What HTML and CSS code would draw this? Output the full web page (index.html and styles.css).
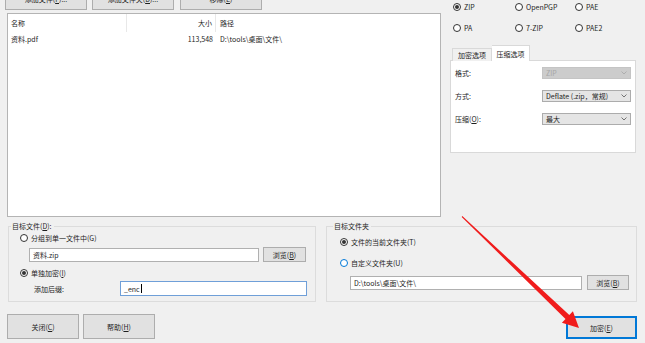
FILE: index.html
```html
<!DOCTYPE html>
<html lang="zh-CN">
<head>
    <meta charset="UTF-8">
    <meta name="viewport" content="width=device-width, initial-scale=1.0">
    <title>加密文件</title>
    <link rel="stylesheet" href="styles.css">
</head>
<body>

    <div class="window">
        <div class="top">
            <!-- 文件列表 -->
            <div class="files">
                <div class="toolbar">
                    <button class="btn">添加文件(<u>F</u>)...</button>
                    <button class="btn">添加文件夹(<u>D</u>)...</button>
                    <button class="btn btn-remove">移除(<u>E</u>)</button>
                </div>
                <div class="list">
                    <div class="list-head">
                        <span class="col-name">名称</span>
                        <span class="col-size">大小</span>
                        <span class="col-path">路径</span>
                    </div>
                    <div class="list-row">
                        <span class="col-name">资料.pdf</span>
                        <span class="col-size">113,548</span>
                        <span class="col-path">D:\tools\桌面\文件\</span>
                    </div>
                </div>
            </div>

            <!-- 格式和选项 -->
            <div class="options">
                <div class="formats">
                    <label class="radio-item"><span class="radio checked"></span>ZIP</label>
                    <label class="radio-item"><span class="radio"></span>OpenPGP</label>
                    <label class="radio-item"><span class="radio"></span>PAE</label>
                    <label class="radio-item"><span class="radio"></span>PA</label>
                    <label class="radio-item"><span class="radio"></span>7-ZIP</label>
                    <label class="radio-item"><span class="radio"></span>PAE2</label>
                </div>
                <div class="tabs">
                    <span class="tab">加密选项</span>
                    <span class="tab active">压缩选项</span>
                </div>
                <div class="tab-panel">
                    <div class="field">
                        <span class="field-label">格式:</span>
                        <span class="select disabled">ZIP
                            <svg width="6" height="4" viewBox="0 0 6 4"><path d="M0.5 0.5 L3 3 L5.5 0.5" fill="none" stroke="currentColor" stroke-width="0.8"/></svg>
                        </span>
                    </div>
                    <div class="field">
                        <span class="field-label">方式:</span>
                        <span class="select">Deflate (.zip，常规)
                            <svg width="6" height="4" viewBox="0 0 6 4"><path d="M0.5 0.5 L3 3 L5.5 0.5" fill="none" stroke="currentColor" stroke-width="0.8"/></svg>
                        </span>
                    </div>
                    <div class="field">
                        <span class="field-label">压缩(<u>O</u>):</span>
                        <span class="select">最大
                            <svg width="6" height="4" viewBox="0 0 6 4"><path d="M0.5 0.5 L3 3 L5.5 0.5" fill="none" stroke="currentColor" stroke-width="0.8"/></svg>
                        </span>
                    </div>
                </div>
            </div>
        </div>

        <div class="groups">
            <fieldset class="group group-file">
                <legend>目标文件(<u>D</u>):</legend>
                <div class="g-row row-single"><span class="radio"></span>分组到单一文件中(G)</div>
                <div class="g-row row-zip">
                    <span class="input input-zip">资料.zip</span>
                    <button class="btn btn-browse">浏览(<u>B</u>)</button>
                </div>
                <div class="g-row row-each"><span class="radio checked"></span>单独加密(<u>I</u>)</div>
                <div class="g-row row-suffix">
                    <span class="suffix-label">添加后缀:</span>
                    <span class="input input-suffix">_enc<span class="caret"></span></span>
                </div>
            </fieldset>

            <fieldset class="group group-folder">
                <legend>目标文件夹</legend>
                <div class="g-row row-current"><span class="radio checked"></span>文件的当前文件夹(T)</div>
                <div class="g-row row-custom"><span class="radio hover"></span>自定义文件夹(U)</div>
                <div class="g-row row-folder">
                    <span class="input input-folder">D:\tools\桌面\文件\</span>
                    <button class="btn btn-browse">浏览(<u>B</u>)</button>
                </div>
            </fieldset>
        </div>

        <div class="footer">
            <button class="btn btn-foot">关闭(<u>C</u>)</button>
            <button class="btn btn-foot">帮助(<u>H</u>)</button>
            <button class="btn btn-foot btn-default">加密(<u>E</u>)</button>
        </div>

        <!-- 红色箭头标注 -->
        <svg class="arrow" width="645" height="343" viewBox="0 0 645 343">
            <polygon points="461.7,216.9 565.5,319 561.9,322.8 579,328 572.9,311.2 569.3,315 462.3,216.1" fill="#f01c1c"/>
        </svg>
    </div>

</body>
</html>
```

FILE: styles.css
```css
* {
    box-sizing: border-box;
}

body {
    margin: 0;
    background: #f0f0f0;
    font-family: "Noto Sans CJK SC", "Microsoft YaHei", sans-serif;
    font-size: 7px;
    color: #1e1e1e;
}

u {
    text-decoration: underline;
}

.window {
    position: relative;
    width: 645px;
    height: 343px;
    overflow: hidden;
}

.btn {
    display: flex;
    align-items: center;
    justify-content: center;
    padding: 0;
    background: #e1e1e1;
    border: 1px solid #adadad;
    font: inherit;
    color: inherit;
}

/* Верхняя часть */
.top {
    display: flex;
    height: 217px;
}

.files {
    width: 441px;
    padding-left: 7px;
    display: flex;
    flex-direction: column;
}

.toolbar {
    display: flex;
    gap: 5px;
    margin-top: -12px;
    margin-left: -2px;
}

.toolbar .btn {
    width: 82px;
    height: 22px;
}

.btn-remove {
    margin-left: 1px;
}

.list {
    flex: 1;
    margin-top: 3px;
    background: #fff;
    border: 1px solid #b4b4b4;
}

.list-head,
.list-row {
    display: flex;
}

.list-head {
    height: 18px;
}

.list-row {
    height: 14px;
}

.list-head span,
.list-row span {
    display: flex;
    align-items: center;
}

.list-head span {
    border-right: 1px solid #e8e8e8;
}

.list-head .col-path {
    border-right: none;
}

.col-name {
    width: 119px;
    padding-left: 3px;
}

.col-size {
    width: 89px;
    justify-content: flex-end;
    padding-right: 3px;
}

.col-path {
    padding-left: 4px;
}

.options {
    flex: 1;
    margin-left: 6px;
}

.formats {
    display: grid;
    grid-template-columns: 62px 60px auto;
    grid-auto-rows: 14px;
    row-gap: 7px;
    padding-left: 6px;
}

.radio-item,
.g-row {
    display: flex;
    align-items: center;
}

.radio {
    width: 8px;
    height: 8px;
    margin-right: 3px;
    border: 1px solid #333;
    border-radius: 50%;
    background: #fff;
    display: flex;
    align-items: center;
    justify-content: center;
}

.radio.checked::after {
    content: "";
    width: 4px;
    height: 4px;
    border-radius: 50%;
    background: #333;
}

.radio.hover {
    border-color: #0078d7;
}

.tabs {
    display: flex;
    align-items: flex-end;
    height: 16px;
    margin-top: 10px;
    margin-left: 5px;
    margin-bottom: -1px;
}

.tab {
    display: flex;
    align-items: center;
    justify-content: center;
    width: 40px;
    height: 13px;
    border: 1px solid #d9d9d9;
    border-bottom: none;
    background: #f0f0f0;
}

.tab.active {
    position: relative;
    width: 38px;
    height: 16px;
    background: #fff;
    border-left: none;
}

.tab-panel {
    width: 186px;
    height: 93px;
    margin-left: 3px;
    padding: 6px 4px 0;
    background: #fff;
    border: 1px solid #d9d9d9;
    display: flex;
    flex-direction: column;
    gap: 11px;
}

.field {
    display: flex;
    align-items: center;
    height: 12px;
}

.field-label {
    width: 87px;
}

.select {
    width: 89px;
    height: 12px;
    display: flex;
    align-items: center;
    justify-content: space-between;
    padding: 0 3px;
    background: #e5e5e5;
    border: 1px solid #acacac;
}

.select svg {
    color: #555;
}

.select.disabled {
    color: #a6a6a6;
    background: #cccccc;
    border-color: #c4c4c4;
}

.select.disabled svg {
    color: #a6a6a6;
}

/* Нижние группы */
.groups {
    display: flex;
    gap: 10px;
    margin-top: 4px;
    padding-left: 8px;
}

.group {
    margin: 0;
    height: 81px;
    padding: 0 2px;
    border: 1px solid #dcdcdc;
}

.group legend {
    padding: 0 2px 0 1px;
    line-height: 10px;
}

.group-file {
    width: 308px;
}

.group-folder {
    width: 311px;
}

.group-folder legend {
    margin-left: 4px;
}

.group-file .g-row {
    margin-left: 9px;
}

.group-folder .g-row {
    margin-left: 11px;
}

.row-single {
    height: 10px;
    margin-top: 2px;
}

.row-zip {
    height: 15px;
    margin-top: 4px;
}

.input {
    display: flex;
    align-items: center;
    height: 14px;
    padding-left: 3px;
    background: #fff;
    border: 1px solid #b0b0b0;
}

.input-zip {
    width: 230px;
    margin-left: 9px;
}

.btn-browse {
    height: 15px;
}

.row-zip .btn-browse {
    width: 43px;
    margin-left: 4px;
}

.row-each {
    height: 10px;
    margin-top: 6px;
}

.row-suffix {
    height: 15px;
    margin-top: 3px;
}

.suffix-label {
    width: 86px;
    margin-left: 14px;
}

.input-suffix {
    width: 187px;
    height: 15px;
    border-color: #6f9fd8;
}

.caret {
    width: 1px;
    height: 9px;
    margin-left: 1px;
    background: #000;
}

.row-current {
    height: 10px;
    margin-top: 6px;
}

.row-custom {
    height: 10px;
    margin-top: 11px;
}

.row-folder {
    height: 15px;
    margin-top: 7px;
}

.input-folder {
    width: 232px;
    margin-left: 10px;
}

.row-folder .btn-browse {
    width: 42px;
    margin-left: 5px;
}

/* Кнопки внизу */
.footer {
    display: flex;
    align-items: flex-start;
    gap: 4px;
    margin-top: 12px;
    padding: 0 8px 0 7px;
}

.btn-foot {
    width: 72px;
    height: 25px;
}

.btn-default {
    width: 71px;
    height: 23px;
    margin-top: 2px;
    margin-left: auto;
    border: 2px solid #0078d7;
}

.arrow {
    position: absolute;
    left: 0;
    top: 0;
    pointer-events: none;
}
```
